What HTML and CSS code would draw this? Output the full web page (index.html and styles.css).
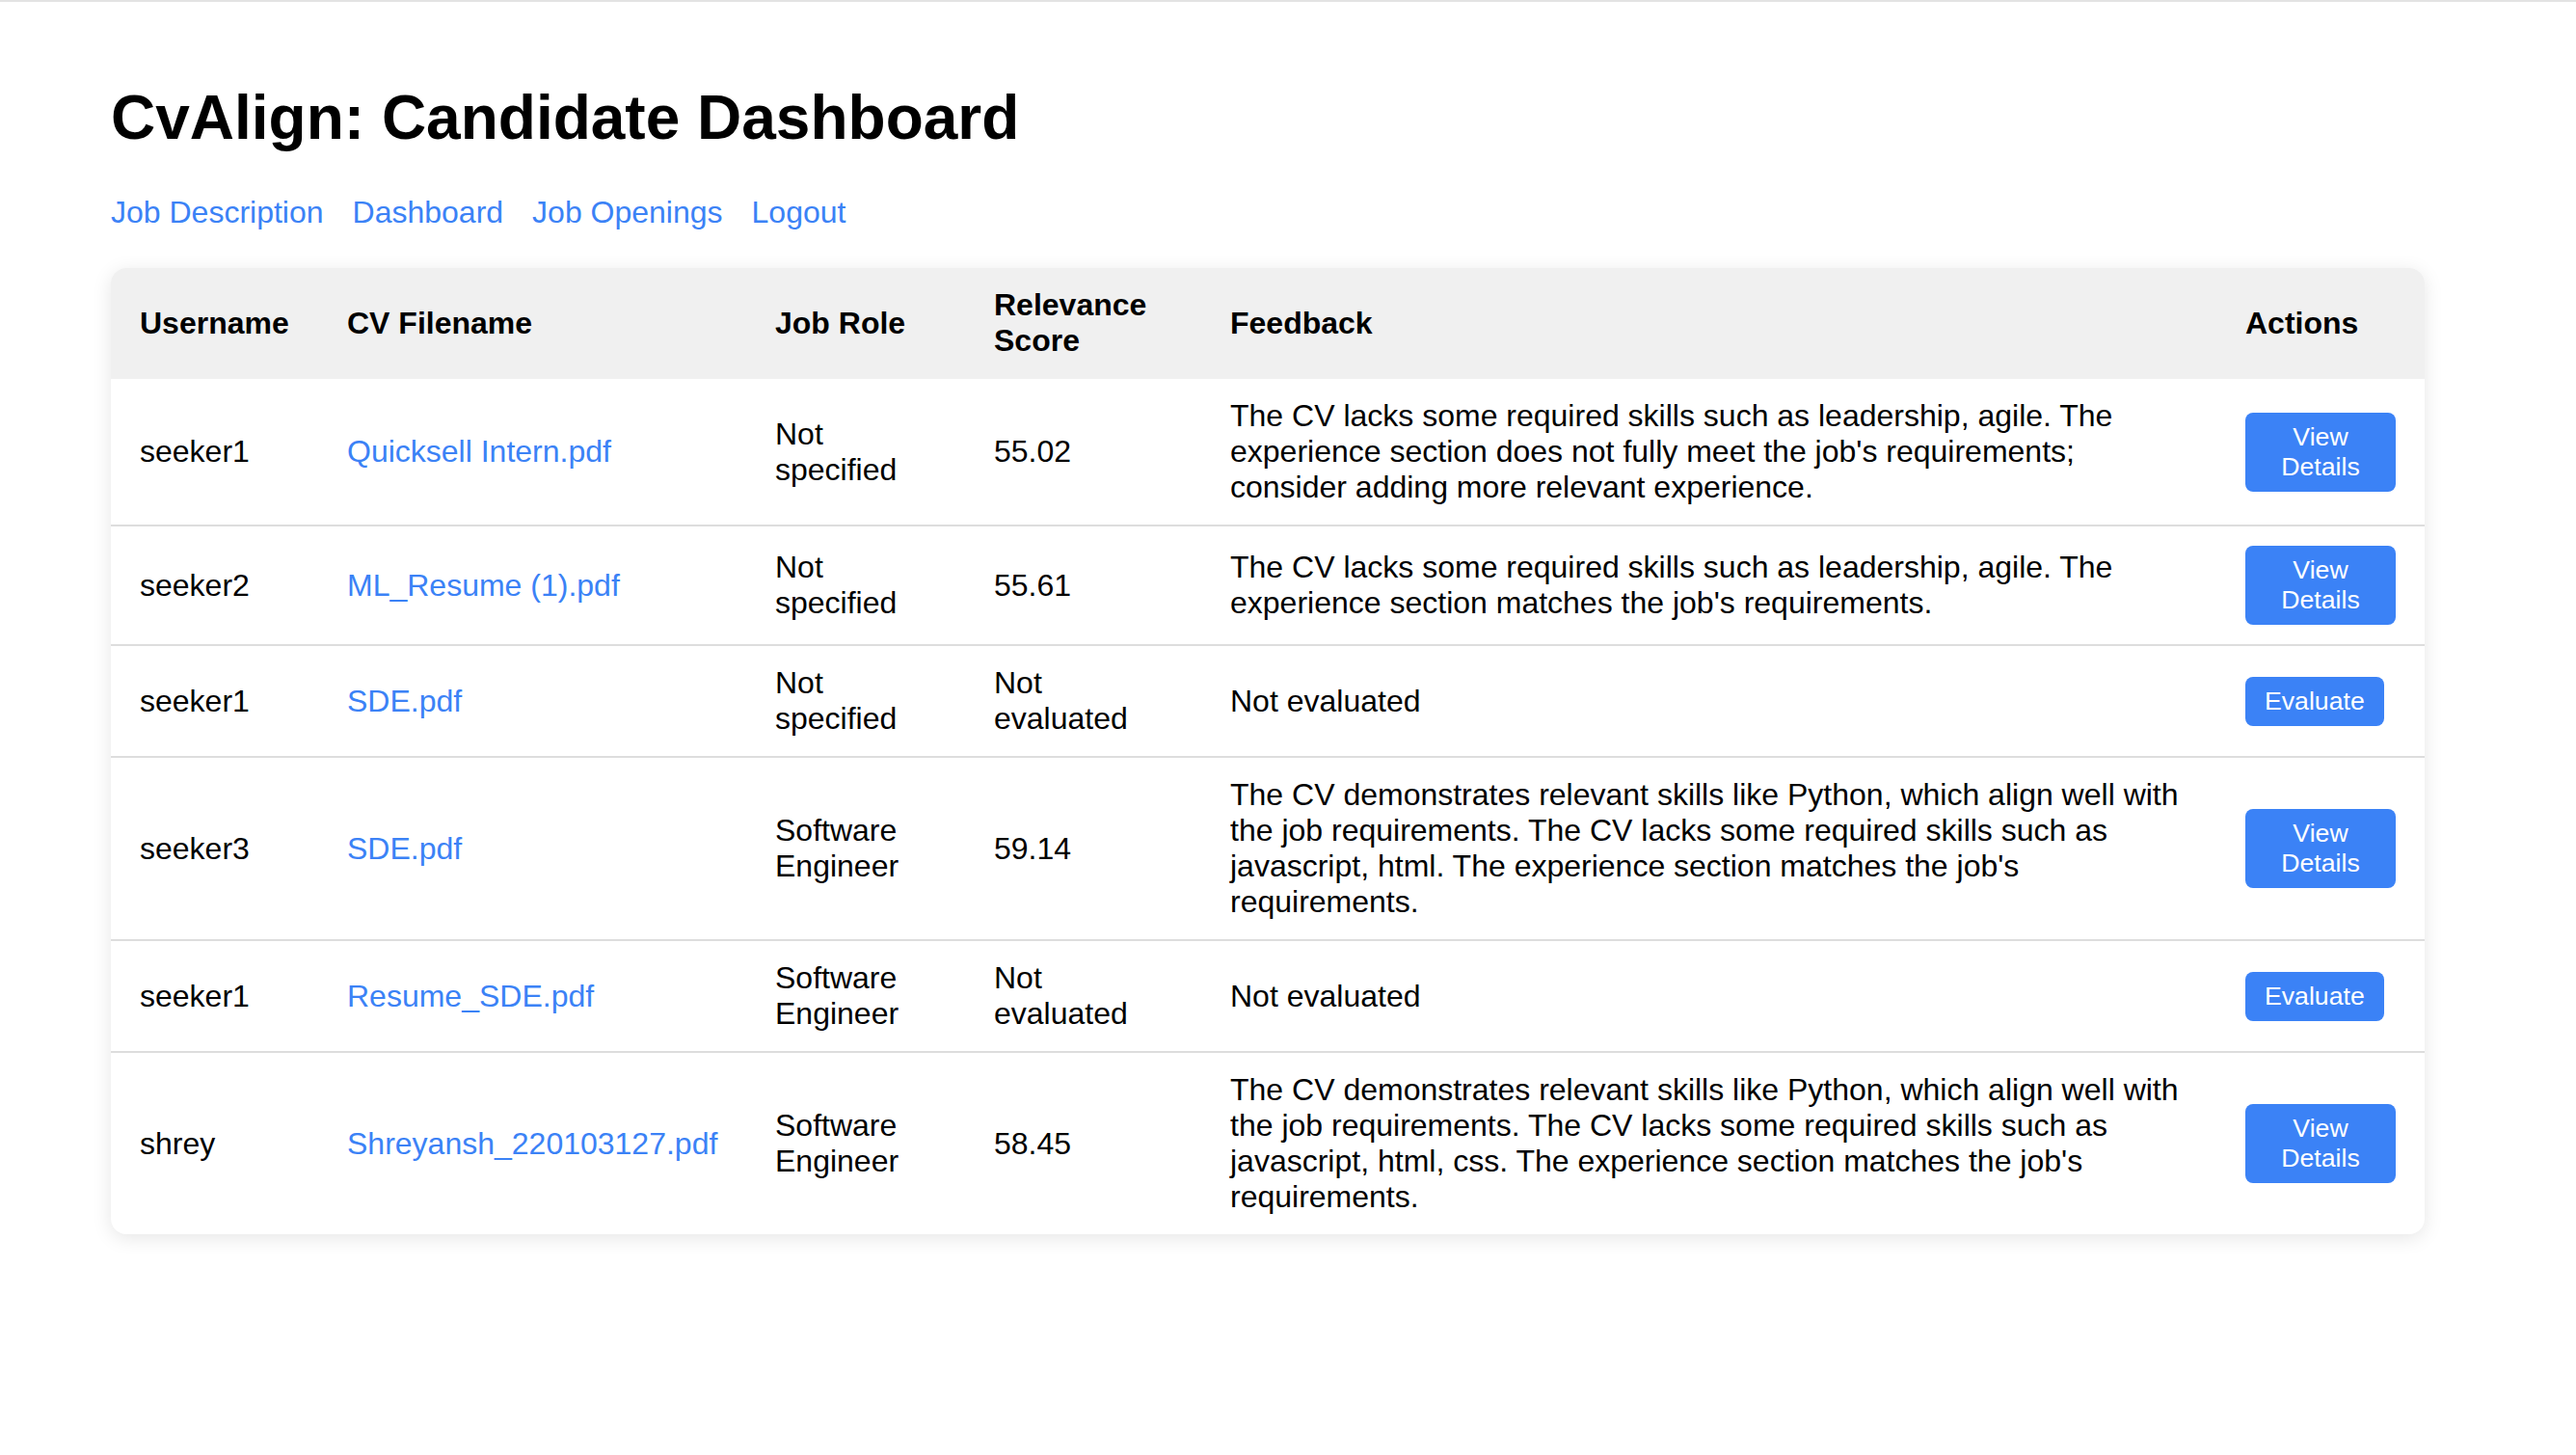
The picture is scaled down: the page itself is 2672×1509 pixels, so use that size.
FILE: index.html
```html
<!DOCTYPE html>
<html lang="en">
<head>
<meta charset="utf-8">
<title>CvAlign: Candidate Dashboard</title>
<link rel="stylesheet" href="styles.css">
</head>
<body>
<div class="container">
  <h1 class="title">CvAlign: Candidate Dashboard</h1>
  <nav class="nav">
    <a href="#" class="nav-link">Job Description</a>
    <a href="#" class="nav-link">Dashboard</a>
    <a href="#" class="nav-link">Job Openings</a>
    <a href="#" class="nav-link">Logout</a>
  </nav>
  <div class="card">
    <table class="table">
      <colgroup>
        <col class="col-user">
        <col class="col-file">
        <col class="col-role">
        <col class="col-score">
        <col class="col-feedback">
        <col class="col-actions">
      </colgroup>
      <thead>
        <tr>
          <th>Username</th>
          <th>CV Filename</th>
          <th>Job Role</th>
          <th>Relevance Score</th>
          <th>Feedback</th>
          <th>Actions</th>
        </tr>
      </thead>
      <tbody>
        <tr>
          <td>seeker1</td>
          <td><a href="#" class="file-link">Quicksell Intern.pdf</a></td>
          <td>Not specified</td>
          <td>55.02</td>
          <td>The CV lacks some required skills such as leadership, agile. The experience section does not fully meet the job's requirements; consider adding more relevant experience.</td>
          <td><button class="btn">View Details</button></td>
        </tr>
        <tr>
          <td>seeker2</td>
          <td><a href="#" class="file-link">ML_Resume (1).pdf</a></td>
          <td>Not specified</td>
          <td>55.61</td>
          <td>The CV lacks some required skills such as leadership, agile. The experience section matches the job's requirements.</td>
          <td><button class="btn">View Details</button></td>
        </tr>
        <tr>
          <td>seeker1</td>
          <td><a href="#" class="file-link">SDE.pdf</a></td>
          <td>Not specified</td>
          <td>Not evaluated</td>
          <td>Not evaluated</td>
          <td><button class="btn">Evaluate</button></td>
        </tr>
        <tr>
          <td>seeker3</td>
          <td><a href="#" class="file-link">SDE.pdf</a></td>
          <td>Software Engineer</td>
          <td>59.14</td>
          <td>The CV demonstrates relevant skills like Python, which align well with the job requirements. The CV lacks some required skills such as javascript, html. The experience section matches the job's requirements.</td>
          <td><button class="btn">View Details</button></td>
        </tr>
        <tr>
          <td>seeker1</td>
          <td><a href="#" class="file-link">Resume_SDE.pdf</a></td>
          <td>Software Engineer</td>
          <td>Not evaluated</td>
          <td>Not evaluated</td>
          <td><button class="btn">Evaluate</button></td>
        </tr>
        <tr>
          <td>shrey</td>
          <td><a href="#" class="file-link">Shreyansh_220103127.pdf</a></td>
          <td>Software Engineer</td>
          <td>58.45</td>
          <td>The CV demonstrates relevant skills like Python, which align well with the job requirements. The CV lacks some required skills such as javascript, html, css. The experience section matches the job's requirements.</td>
          <td><button class="btn">View Details</button></td>
        </tr>
      </tbody>
    </table>
  </div>
</div>
</body>
</html>
```
FILE: styles.css
```css
html, body {
  margin: 0;
  padding: 0;
  background: #ffffff;
}

body {
  border-top: 2px solid #e3e3e3;
  font-family: "Liberation Sans", Arial, sans-serif;
  font-size: 32px;
  color: #000;
}

.container {
  padding: 40px 0 80px 115px;
}

.title {
  font-size: 64px;
  font-weight: bold;
  margin: 43px 0;
}

.nav {
  display: flex;
  gap: 30px;
  margin-bottom: 39px;
}

.nav-link,
.file-link {
  color: #3b82f6;
  text-decoration: none;
}

.card {
  width: 2400px;
  border-radius: 16px;
  overflow: hidden;
  background: #fff;
  box-shadow: 0 4px 20px rgba(0, 0, 0, 0.1);
}

.table {
  width: 100%;
  table-layout: fixed;
  border-collapse: collapse;
}

.col-user { width: 215px; }
.col-file { width: 444px; }
.col-role { width: 227px; }
.col-score { width: 245px; }
.col-feedback { width: 1053px; }
.col-actions { width: 216px; }

.table th {
  background: #f0f0f0;
  text-align: left;
  font-weight: bold;
  padding: 20px 30px 21px;
}

.table td {
  padding: 20px 30px;
  border-bottom: 2px solid #dddddd;
}

.table tbody tr:last-child td {
  border-bottom: none;
}

.btn {
  background: #3b82f6;
  color: #fff;
  border: none;
  border-radius: 8px;
  padding: 10px 20px;
  font-family: "Liberation Sans", Arial, sans-serif;
  font-size: 26.67px;
  cursor: pointer;
}
```
